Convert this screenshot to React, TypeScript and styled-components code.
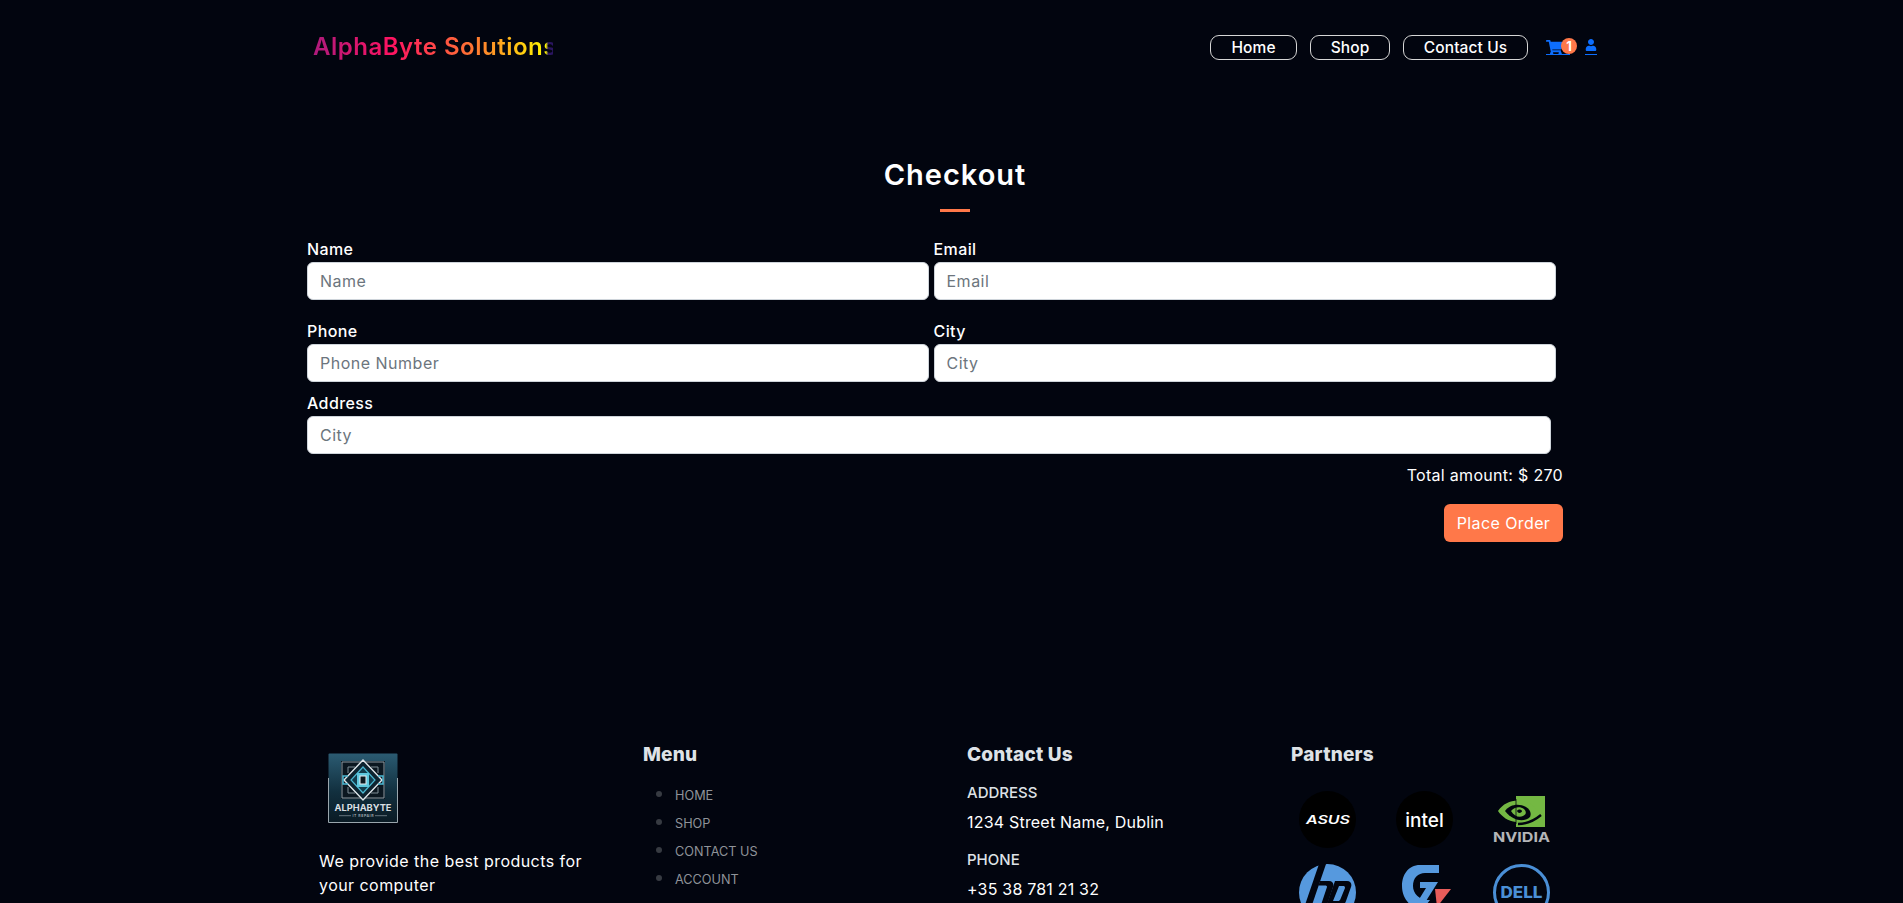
import { FC } from 'react';
import styled, { createGlobalStyle } from 'styled-components';
import { FaShoppingCart, FaUser } from 'react-icons/fa';

const GlobalStyle = createGlobalStyle`
	html, body {
		margin: 0;
		padding: 0;
		background: #02050f;
		overflow: hidden;
	}
	* {
		box-sizing: border-box;
	}
	body {
		font-family: 'Inter', 'Open Sans', sans-serif;
		color: #fff;
	}
`;

const Page = styled.div`
	height: 903px;
	overflow: hidden;
	background: #02050f;
`;

const Header = styled.header`
	display: flex;
	align-items: center;
	justify-content: space-between;
	height: 94px;
	padding: 0 306px 0 313px;
`;

const Brand = styled.div`
	width: 240px;
	font-size: 24px;
	font-weight: 600;
	line-height: 34px;
	letter-spacing: 0.5px;
	white-space: nowrap;
	overflow: hidden;
	background: linear-gradient(to right, #ad1a7c 0%, #ff1361 33%, #ff7a30 68%, #fff800 97%, #2a1560 98%);
	-webkit-background-clip: text;
	background-clip: text;
	color: transparent;
`;

const Nav = styled.nav`
	display: flex;
	align-items: center;
`;

const NavLink = styled.a<{ $width: number }>`
	display: flex;
	align-items: center;
	justify-content: center;
	width: ${(p) => p.$width}px;
	height: 25px;
	margin-right: 13px;
	border: 1px solid #d6d6d6;
	border-radius: 9px;
	font-size: 15.5px;
	font-weight: 500;
	letter-spacing: 0.1px;
	color: #fff;
`;

const IconLink = styled.a`
	position: relative;
	display: flex;
	align-items: flex-start;
	height: 18px;
	margin-bottom: 3px;
	padding-top: 2px;
	color: #0d6efd;
	border-bottom: 1px solid #0d6efd;
`;

const CartLink = styled(IconLink)`
	width: 24px;
	margin-left: 5px;
	margin-right: 15px;
`;

const UserLink = styled(IconLink)`
	width: 12px;
`;

const Badge = styled.span`
	position: absolute;
	top: 1px;
	left: 15px;
	width: 16px;
	height: 16px;
	border-radius: 50%;
	background: #ff7849;
	color: #fff;
	font-size: 13px;
	font-weight: 700;
	line-height: 16px;
	text-align: center;
`;

const Main = styled.main`
	padding: 60px 300px 0 307px;
`;

const Title = styled.h1`
	margin: 0;
	font-size: 29px;
	font-weight: 600;
	line-height: 42px;
	letter-spacing: 1px;
	text-align: center;
	color: #fff;
`;

const TitleRule = styled.div`
	width: 30px;
	height: 3px;
	margin: 13px auto 25px;
	background: #ff7849;
`;

const FormGrid = styled.div`
	display: grid;
	grid-template-columns: 622px 622px;
	column-gap: 4.5px;
	row-gap: 19px;
`;

const Field = styled.label`
	display: block;
	font-size: 16px;
	font-weight: 450;
	line-height: 25px;
	letter-spacing: 0.4px;
	color: #fff;
`;

const FullField = styled(Field)`
	width: 1244px;
	margin-top: 9px;
`;

const Input = styled.input`
	display: block;
	width: 100%;
	height: 38px;
	padding: 0 12px;
	border: 1px solid #ced4da;
	border-radius: 6px;
	background: #fff;
	font-family: inherit;
	font-size: 16px;
	letter-spacing: 0.5px;

	&::placeholder {
		color: #6c757d;
		opacity: 1;
	}
`;

const Summary = styled.div`
	width: 1256px;
`;

const Total = styled.p`
	margin: 9px 0 17px;
	font-size: 16px;
	line-height: 24px;
	letter-spacing: 0.3px;
	text-align: right;
	color: #fff;
`;

const Actions = styled.div`
	display: flex;
	justify-content: flex-end;
`;

const OrderButton = styled.button`
	width: 119px;
	height: 38px;
	border: none;
	border-radius: 6px;
	background: #ff7849;
	color: #fff;
	font-family: inherit;
	font-size: 16px;
	letter-spacing: 0.4px;
`;

const Footer = styled.footer`
	display: grid;
	grid-template-columns: repeat(4, 324px);
	margin-top: 199px;
	padding-left: 319px;
`;

const FooterCol = styled.div``;

const Heading = styled.h3`
	margin: 0 0 13px;
	font-size: 19px;
	font-weight: 800;
	line-height: 28px;
	letter-spacing: 0.2px;
	color: #dee2e6;
`;

const LogoBox = styled.div`
	width: 70px;
	height: 70px;
	margin: 12px 0 26px 9px;
`;

const Blurb = styled.p`
	width: 270px;
	margin: 0;
	font-size: 16px;
	line-height: 24px;
	letter-spacing: 0.45px;
	color: #fff;
`;

const MenuList = styled.ul`
	margin: -2px 0 0;
	padding: 0 0 0 32px;
	list-style: disc;
`;

const MenuItem = styled.li`
	height: 28px;
	font-size: 12.7px;
	line-height: 28px;
	color: #8f9399;

	&::marker {
		font-size: 19px;
		color: #373b42;
	}
`;

const ContactLabel = styled.div`
	font-size: 15px;
	font-weight: 500;
	line-height: 22px;
	color: #dee2e6;
`;

const ContactValue = styled.div`
	margin: 6px 0 15px;
	font-size: 16px;
	font-weight: 400;
	line-height: 24px;
	letter-spacing: 0.2px;
	color: #fff;
`;

const PartnerGrid = styled.div`
	display: grid;
	grid-template-columns: repeat(3, 57px);
	column-gap: 40px;
	row-gap: 16px;
	margin: 22px 0 0 8px;
`;

const PartnerSvg = styled.svg`
	display: block;
	width: 57px;
	height: 57px;
`;

const MarkSvg = styled.svg`
	display: block;
	width: 70px;
	height: 70px;
`;

const LogoText = styled.text<{ $size: number; $weight?: number; $fill?: string; $italic?: boolean }>`
	font-family: 'Inter', 'Liberation Sans', sans-serif;
	font-size: ${(p) => p.$size}px;
	font-weight: ${(p) => p.$weight || 400};
	font-style: ${(p) => (p.$italic ? 'italic' : 'normal')};
	fill: ${(p) => p.$fill || '#fff'};
	text-anchor: middle;
`;

const BrandMark: FC = () => (
	<MarkSvg viewBox="0 0 70 70">
		<defs>
			<linearGradient id="markBg" x1="0" y1="0" x2="0" y2="1">
				<stop offset="0" stopColor="#2b5b72" />
				<stop offset="0.55" stopColor="#12303f" />
				<stop offset="1" stopColor="#0a1a24" />
			</linearGradient>
		</defs>
		<rect x="0.5" y="0.5" width="69" height="69" rx="1" fill="url(#markBg)" />
		<path d="M0.5 25V69.5H69.5V25" fill="none" stroke="#9aa6ad" strokeWidth="1" />
		<rect x="13" y="8" width="44" height="38" fill="#0b1720" />
		<path d="M14 9H56V45H14Z" fill="none" stroke="#8d9aa1" strokeWidth="1" />
		<path d="M35 7L54 27L35 47L16 27Z" fill="#0e2430" stroke="#dfe6ea" strokeWidth="1.4" />
		<path d="M35 14L47 27L35 40L23 27Z" fill="#123c4d" stroke="#4bb8d2" strokeWidth="1.2" />
		<rect x="29" y="20" width="12" height="14" fill="#5ec7de" />
		<rect x="32" y="23" width="6" height="8" fill="#0b1720" stroke="#e7eef1" strokeWidth="1" />
		<path d="M20 23H15V31H20M50 23H55V31H50" fill="none" stroke="#4bb8d2" strokeWidth="1.5" />
		<path d="M20 14H27M43 14H50M20 40H27M43 40H50M20 14V20M50 14V20M20 34V40M50 34V40" stroke="#7f8d94" strokeWidth="1" />
		<LogoText x="35" y="57.5" $size={9} $weight={700} $fill="#d9dfe2" textLength="57" lengthAdjust="spacingAndGlyphs">
			ALPHABYTE
		</LogoText>
		<LogoText x="35" y="64" $size={3.6} $weight={600} $fill="#aab4ba" textLength="21" lengthAdjust="spacing">
			IT REPAIR
		</LogoText>
		<path d="M11 62.7H23M47 62.7H59" stroke="#8d9aa1" strokeWidth="0.7" />
	</MarkSvg>
);

const AsusLogo: FC = () => (
	<PartnerSvg viewBox="0 0 57 57">
		<circle cx="28.5" cy="28.5" r="28.5" fill="#000" />
		<LogoText x="29" y="33" $size={11.5} $weight={600} $italic textLength="44" lengthAdjust="spacingAndGlyphs">
			ASUS
		</LogoText>
	</PartnerSvg>
);

const IntelLogo: FC = () => (
	<PartnerSvg viewBox="0 0 57 57">
		<circle cx="28.5" cy="28.5" r="28.5" fill="#000" />
		<LogoText x="28.5" y="36" $size={19} $weight={500}>
			intel
		</LogoText>
	</PartnerSvg>
);

const NvidiaLogo: FC = () => (
	<PartnerSvg viewBox="0 0 57 57">
		<rect x="23" y="5" width="29" height="31" fill="#74b843" />
		<path d="M5 20C12 10 24 7 36 12C41 15 45 19 47 23L46 24C38 32 26 33 23 31C15 30 9 26 5 20Z" fill="#74b843" />
		<path d="M12 20C17 13 26 12 33 16C38 19 39 24 36 27C30 31 20 30 12 20Z" fill="#02050f" />
		<path d="M18 20C21 16 27 15 31 18C34 21 33 24 30 25C26 27 21 25 18 20Z" fill="#74b843" />
		<path d="M24 20C25 18 28 18 29 20C29 22 25 23 24 20Z" fill="#02050f" />
		<path d="M23 8V33" stroke="#02050f" strokeWidth="0.8" />
		<path d="M25 33C34 33 42 29 48 24" fill="none" stroke="#02050f" strokeWidth="2.4" />
		<LogoText x="28.5" y="51" $size={13.5} $weight={700} $fill="#b4b5b8" textLength="57" lengthAdjust="spacingAndGlyphs">
			NVIDIA
		</LogoText>
	</PartnerSvg>
);

const HpLogo: FC = () => (
	<PartnerSvg viewBox="0 0 57 57">
		<circle cx="28.5" cy="28.5" r="28.5" fill="#5699de" />
		<path d="M20 0H27L13 41H6Z" fill="#02050f" />
		<path d="M21 17H30C34 17 35 20 34 23L28 41H22L28 23C28 22 27.5 21.5 26 21.5H19.5Z" fill="#02050f" />
		<path
			fillRule="evenodd"
			d="M36 17H48C52 17 53 20 52 23L47 37C46 40 44 42 41 42H33L29 54H23ZM40 22L34 37H39C40 37 41 36.5 41.5 35L46 24C46 22.5 45.5 22 44 22Z"
			fill="#02050f"
		/>
	</PartnerSvg>
);

const GigabyteLogo: FC = () => (
	<PartnerSvg viewBox="0 0 57 57">
		<path d="M43 1H24C12 1 6 11 6 22C6 35 15 45 27 45L34 36C24 37 17 30 17 22C17 14 22 9 29 9H43Z" fill="#5699de" />
		<path d="M24 18H42L30 37H22L30 24H24Z" fill="#5699de" />
		<path d="M39 25H55L41 43Z" fill="#e85c5a" />
	</PartnerSvg>
);

const DellLogo: FC = () => (
	<PartnerSvg viewBox="0 0 57 57">
		<circle cx="28.5" cy="28.5" r="27" fill="none" stroke="#4a8fd6" strokeWidth="3" />
		<LogoText x="28.5" y="34" $size={16} $weight={800} $fill="#4a8fd6" textLength="42" lengthAdjust="spacingAndGlyphs">
			DELL
		</LogoText>
	</PartnerSvg>
);

const menu = ['HOME', 'SHOP', 'CONTACT US', 'ACCOUNT'];

const App: FC = () => {
	return (
		<Page>
			<GlobalStyle />
			<Header>
				<Brand>AlphaByte Solutions</Brand>
				<Nav>
					<NavLink $width={87}>Home</NavLink>
					<NavLink $width={80}>Shop</NavLink>
					<NavLink $width={125}>Contact Us</NavLink>
					<CartLink>
						<FaShoppingCart size={17} />
						<Badge>1</Badge>
					</CartLink>
					<UserLink>
						<FaUser size={12} />
					</UserLink>
				</Nav>
			</Header>

			<Main>
				<Title>Checkout</Title>
				<TitleRule />
				<FormGrid>
					<Field>
						Name
						<Input placeholder="Name" />
					</Field>
					<Field>
						Email
						<Input placeholder="Email" />
					</Field>
					<Field>
						Phone
						<Input placeholder="Phone Number" />
					</Field>
					<Field>
						City
						<Input placeholder="City" />
					</Field>
				</FormGrid>
				<FullField>
					Address
					<Input placeholder="City" />
				</FullField>
				<Summary>
					<Total>Total amount: $ 270</Total>
					<Actions>
						<OrderButton>Place Order</OrderButton>
					</Actions>
				</Summary>
			</Main>

			<Footer>
				<FooterCol>
					<LogoBox>
						<BrandMark />
					</LogoBox>
					<Blurb>We provide the best products for your computer</Blurb>
				</FooterCol>
				<FooterCol>
					<Heading>Menu</Heading>
					<MenuList>
						{menu.map((item) => (
							<MenuItem key={item}>{item}</MenuItem>
						))}
					</MenuList>
				</FooterCol>
				<FooterCol>
					<Heading>Contact Us</Heading>
					<ContactLabel>ADDRESS</ContactLabel>
					<ContactValue>1234 Street Name, Dublin</ContactValue>
					<ContactLabel>PHONE</ContactLabel>
					<ContactValue>+35 38 781 21 32</ContactValue>
				</FooterCol>
				<FooterCol>
					<Heading>Partners</Heading>
					<PartnerGrid>
						<AsusLogo />
						<IntelLogo />
						<NvidiaLogo />
						<HpLogo />
						<GigabyteLogo />
						<DellLogo />
					</PartnerGrid>
				</FooterCol>
			</Footer>
		</Page>
	);
};

export default App;
